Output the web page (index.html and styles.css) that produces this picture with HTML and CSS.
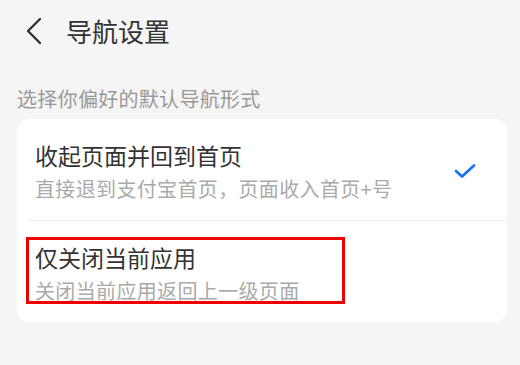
FILE: index.html
```html
<!DOCTYPE html>
<html>
<head>
    <title>导航设置</title>
    <meta name="viewport" content="width=device-width, initial-scale=1">
    <link rel="stylesheet" href="styles.css">
</head>
<body>
    <div class="header">
        <svg class="back" width="20" height="28" viewBox="0 0 20 28">
            <path d="M16 2 L4 14 L16 26" fill="none" stroke="#333" stroke-width="2.4" stroke-linecap="round" stroke-linejoin="round"/>
        </svg>
        <h1>导航设置</h1>
    </div>

    <div class="section-label">选择你偏好的默认导航形式</div>

    <div class="card">
        <div class="option">
            <div class="option-text">
                <div class="option-title">收起页面并回到首页</div>
                <div class="option-desc">直接退到支付宝首页，页面收入首页+号</div>
            </div>
            <svg class="check" width="24" height="18" viewBox="0 0 24 18">
                <path d="M3 9 L9 14.5 L21 3.5" fill="none" stroke="#1a73f0" stroke-width="2.8" stroke-linecap="round" stroke-linejoin="round"/>
            </svg>
        </div>
        <div class="divider"></div>
        <div class="option">
            <div class="option-text">
                <div class="option-title">仅关闭当前应用</div>
                <div class="option-desc">关闭当前应用返回上一级页面</div>
            </div>
            <div class="highlight"></div>
        </div>
    </div>
</body>
</html>
```

FILE: styles.css
```css
html, body {
    margin: 0;
    padding: 0;
    background-color: #f5f5f5;
    font-family: "Noto Sans CJK SC", "Noto Sans", sans-serif;
}

.header {
    height: 62px;
    display: flex;
    align-items: center;
    padding-left: 24px;
}

.header .back {
    margin-right: 22px;
}

.header h1 {
    margin: 0;
    font-size: 26px;
    font-weight: 400;
    color: #333;
    line-height: 30px;
}

.section-label {
    margin-top: 25px;
    padding-left: 17px;
    font-size: 20px;
    letter-spacing: 0.3px;
    line-height: 24px;
    color: #999;
}

.card {
    background: white;
    margin: 8px 13px 0 17px;
    border-radius: 12px;
}

.option {
    position: relative;
    display: flex;
    align-items: center;
    padding: 21px 30px 18px 18px;
}

.option-text {
    flex: 1;
}

.option-title {
    font-size: 23px;
    line-height: 30px;
    color: #333;
}

.option-desc {
    margin-top: 6px;
    font-size: 20px;
    letter-spacing: 0.35px;
    line-height: 26px;
    color: #aaa;
}

.divider {
    height: 1px;
    margin-left: 10px;
    background-color: #f0f0f0;
}

.highlight {
    position: absolute;
    left: 9px;
    top: 16px;
    width: 313px;
    height: 61px;
    border: 3px solid #ee0000;
}
```
